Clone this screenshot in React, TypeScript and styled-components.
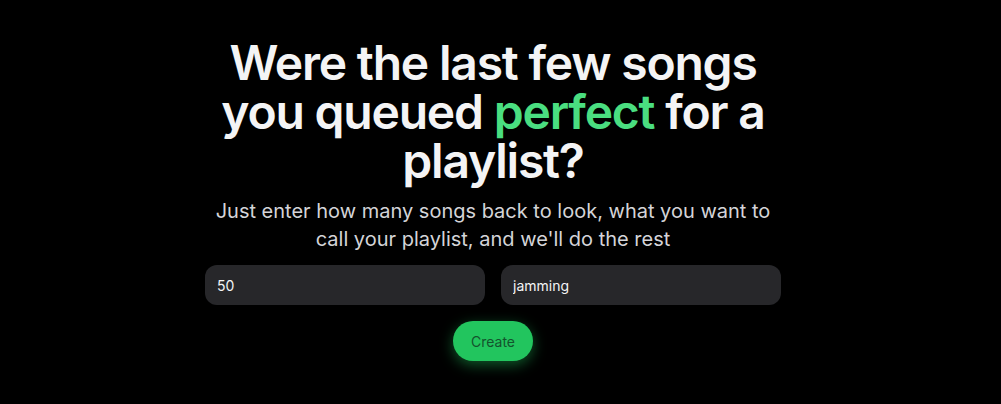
import React from "react";
import styled, { createGlobalStyle } from "styled-components";

const Global = createGlobalStyle`
  html, body { margin: 0; padding: 0; background: #000; }
  body { font-family: Inter, "Noto Sans", sans-serif; }
  * { box-sizing: border-box; }
`;

const Page = styled.main`
  min-height: 404px;
  background: #000;
  display: flex;
  justify-content: center;
  padding: 38px 15px 0 0;
`;

const Column = styled.div`
  width: 576px;
  display: flex;
  flex-direction: column;
  align-items: center;
`;

const Title = styled.h1`
  margin: 0;
  font-size: 48px;
  line-height: 49px;
  font-weight: 600;
  letter-spacing: -1.2px;
  color: #f4f4f5;
  text-align: center;
  width: 576px;
`;

const Accent = styled.span`
  color: #4ade80;
`;

const Subtitle = styled.p`
  margin: 12px 0 0;
  font-size: 20px;
  line-height: 28px;
  color: #d4d4d8;
  text-align: center;
`;

const Row = styled.div`
  display: grid;
  grid-template-columns: 1fr 1fr;
  gap: 16px;
  width: 100%;
  margin-top: 12px;
`;

const Field = styled.input`
  height: 40px;
  border: none;
  outline: none;
  border-radius: 12px;
  background: #27272a;
  color: #f4f4f5;
  font-family: Inter, sans-serif;
  font-size: 14px;
  padding: 0 12px;
`;

const Button = styled.button`
  margin-top: 16px;
  width: 80px;
  height: 40px;
  border: none;
  border-radius: 9999px;
  background: #22c55e;
  color: #14532d;
  font-family: Inter, sans-serif;
  font-size: 14px;
  box-shadow: 0 4px 14px rgba(34, 197, 94, 0.45);
  cursor: pointer;
`;

export default function App() {
  return (
    <>
      <Global />
      <Page>
        <Column>
          <Title>
            Were the last few songs you queued <Accent>perfect</Accent> for a playlist?
          </Title>
          <Subtitle>
            Just enter how many songs back to look, what you want to call your playlist, and we'll do the rest
          </Subtitle>
          <Row>
            <Field defaultValue="50" />
            <Field defaultValue="jamming" />
          </Row>
          <Button>Create</Button>
        </Column>
      </Page>
    </>
  );
}
